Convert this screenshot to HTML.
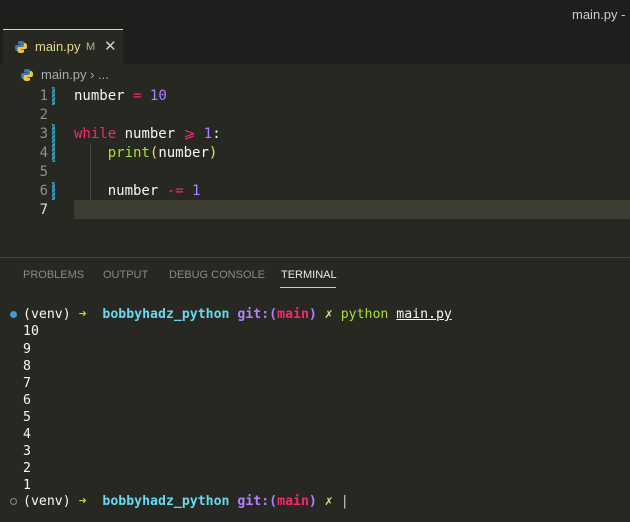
<!DOCTYPE html>
<html><head><style>
body{margin:0;width:630px;height:522px;background:#272822;overflow:hidden;position:relative;font-family:"Liberation Sans",sans-serif}
.top{position:absolute;left:0;top:0;width:630px;height:64px;background:#1e1f1c}
.title{position:absolute;left:572px;top:7px;color:#ccc;font-size:13px}
.tab{position:absolute;left:3px;top:29px;width:120px;height:35px;background:#272822;border-top:1px solid #e6db74;box-sizing:border-box}
.tab span{position:absolute;top:9px;font-size:13px}
.mono{font-family:"DejaVu Sans Mono","Liberation Mono",monospace}
.ln{position:absolute;left:30px;width:18px;text-align:right;color:#90908a;font-size:14px}
.code{position:absolute;left:74px;font-size:14px;color:#f8f8f2;white-space:pre}
.bar{position:absolute;left:52px;width:3px;background:repeating-linear-gradient(135deg,#3a9fbf 0 2px,#27505c 2px 3px)}
.t{position:absolute;left:23px;font-size:13.2px;color:#f8f8f2;white-space:pre}
</style></head><body>
<div class="top"></div>
<div class="title">main.py - </div>
<div class="tab">
<svg style="position:absolute;left:11px;top:10px" width="14" height="14" viewBox="0 0 14 14"><path d="M7 1c-3 0-3 1-3 2v1.5h3v.5H2.5C1 5 1 7 1 8s.5 3 2 3H4V9c0-1 1-2 2-2h3c1 0 1.5-.7 1.5-1.5V3C10.5 2 9.5 1 7 1z" fill="#3c78aa"/><path d="M7 13c3 0 3-1 3-2V9.5H7V9h4.5C13 9 13 7 13 6s-.5-3-2-3H10v2c0 1-1 2-2 2H5c-1 0-1.5.7-1.5 1.5V11c0 1 1 2 3.5 2z" fill="#f0c83c"/></svg>
<span style="left:32px;color:#e2d98f">main.py</span><span style="left:83px;color:#b9b48a;font-size:11px;top:11px">M</span><span style="left:101px;color:#ccc;font-size:15px;top:7px">✕</span></div>
<svg style="position:absolute;left:20px;top:68px" width="14" height="14" viewBox="0 0 14 14"><path d="M7 1c-3 0-3 1-3 2v1.5h3v.5H2.5C1 5 1 7 1 8s.5 3 2 3H4V9c0-1 1-2 2-2h3c1 0 1.5-.7 1.5-1.5V3C10.5 2 9.5 1 7 1z" fill="#3c78aa"/><path d="M7 13c3 0 3-1 3-2V9.5H7V9h4.5C13 9 13 7 13 6s-.5-3-2-3H10v2c0 1-1 2-2 2H5c-1 0-1.5.7-1.5 1.5V11c0 1 1 2 3.5 2z" fill="#f0c83c"/></svg>
<div style="position:absolute;left:41px;top:67px;color:#aaa;font-size:13px">main.py › ...</div>
<div style="position:absolute;left:74px;top:200px;width:556px;height:19px;background:#3e3d32"></div>
<div style="position:absolute;left:90px;top:143px;width:1px;height:57px;background:#464741"></div>
<div class="bar" style="top:87px;height:18px"></div>
<div class="bar" style="top:124px;height:38px"></div>
<div class="bar" style="top:182px;height:18px"></div>
<div class="mono">
<div class="ln" style="top:88px">1</div><div class="ln" style="top:107px">2</div><div class="ln" style="top:126px">3</div><div class="ln" style="top:145px">4</div><div class="ln" style="top:164px">5</div><div class="ln" style="top:183px">6</div><div class="ln" style="top:202px;color:#ddd">7</div>
<div class="code" style="top:88px">number <span style="color:#f92672">=</span> <span style="color:#ae81ff">10</span></div>
<div class="code" style="top:126px"><span style="color:#f92672">while</span> number <span style="color:#f92672">⩾</span> <span style="color:#ae81ff">1</span>:</div>
<div class="code" style="top:145px">    <span style="color:#a6e22e">print</span><span style="color:#e6db74">(</span>number<span style="color:#e6db74">)</span></div>
<div class="code" style="top:183px">    number <span style="color:#f92672">-=</span> <span style="color:#ae81ff">1</span></div>
</div>
<div style="position:absolute;left:0;top:257px;width:630px;height:1px;background:#414339"></div>
<div style="position:absolute;top:269px;font-size:11px;color:#8a8a84;left:23px">PROBLEMS</div>
<div style="position:absolute;top:269px;font-size:11px;color:#8a8a84;left:103px">OUTPUT</div>
<div style="position:absolute;top:269px;font-size:11px;color:#8a8a84;left:169px">DEBUG CONSOLE</div>
<div style="position:absolute;top:269px;font-size:11px;color:#e8e8e8;left:281px">TERMINAL</div>
<div style="position:absolute;top:287px;left:280px;width:56px;height:1px;background:#ccc"></div>
<div style="position:absolute;left:10px;top:311px;width:7px;height:7px;border-radius:50%;background:#3a9fd0"></div>
<div style="position:absolute;left:10px;top:498px;width:7px;height:7px;border-radius:50%;border:1px solid #888;box-sizing:border-box"></div>
<div class="mono">
<div class="t" style="top:307px">(venv) <span style="color:#a6e22e">➜</span>  <b style="color:#66d9ef">bobbyhadz_python</b> <b style="color:#ae81ff">git:(</b><b style="color:#f92672">main</b><b style="color:#ae81ff">)</b> <span style="color:#e6db74">✗</span> <span style="color:#a6e22e">python</span> <u>main.py</u></div>
<div class="t" style="top:324px">10</div><div class="t" style="top:342px">9</div><div class="t" style="top:359px">8</div><div class="t" style="top:376px">7</div><div class="t" style="top:393px">6</div><div class="t" style="top:410px">5</div><div class="t" style="top:427px">4</div><div class="t" style="top:444px">3</div><div class="t" style="top:461px">2</div><div class="t" style="top:478px">1</div>
<div class="t" style="top:494px">(venv) <span style="color:#a6e22e">➜</span>  <b style="color:#66d9ef">bobbyhadz_python</b> <b style="color:#ae81ff">git:(</b><b style="color:#f92672">main</b><b style="color:#ae81ff">)</b> <span style="color:#e6db74">✗</span> <span style="color:#ccc">|</span></div>
</div>
</body></html>
